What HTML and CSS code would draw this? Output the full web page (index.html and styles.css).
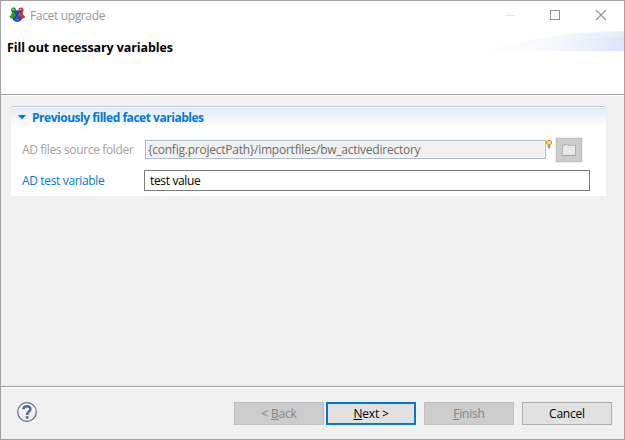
FILE: index.html
```html
<!DOCTYPE html>
<html lang="en">
<head>
<meta charset="utf-8">
<title>Facet upgrade</title>
<link rel="stylesheet" href="styles.css">
</head>
<body>
<div class="window">
  <header class="banner">
    <div class="titlebar">
      <svg class="app-icon" width="17" height="16" viewBox="0 0 17 16">
        <g fill="#25a02b" stroke="#17651c" stroke-width=".6"><circle cx="4.500" cy="3" r="2.200"/><path d="M3.500 4.500h2l.5 3 1.800 2.500-3 2L.8 10 3 7z"/></g>
        <g fill="#dc2c38" stroke="#8e1721" stroke-width=".6"><circle cx="12" cy="3" r="2.200"/><path d="M11 4.500h2l.5 3 2.400 2.500-3.300 2-3-1.500L11 7z"/></g>
        <g fill="#2550c8" stroke="#102b80" stroke-width=".6"><circle cx="8.200" cy="5.800" r="2.200"/><path d="M7.200 7.400h2l.4 2.400 3 1.600q-.3 3-4.300 3.100-4.100-.1-4.400-3.100l2.900-1.600z"/></g>
        <g fill="#fff" opacity=".65"><circle cx="4" cy="2.400" r=".8"/><circle cx="11.600" cy="2.400" r=".8"/><path d="M5.400 12q2.800 1 5.600 0-2.800 2-5.600 0"/></g>
      </svg>
      <span class="title">Facet upgrade</span>
      <svg class="controls" width="130" height="12" viewBox="0 0 130 12" fill="none" shape-rendering="crispEdges">
        <path d="M0 6.500h10" stroke="#e6e6e6"/>
        <path d="M45.500 1.500h9v9h-9z" stroke="#929292"/>
        <path d="M91 1l10 10M101 1l-10 10" stroke="#929292" stroke-width="1.100" shape-rendering="auto"/>
      </svg>
    </div>
    <h1 class="heading">Fill out necessary variables</h1>
    <svg class="swoosh" width="140" height="20" viewBox="0 0 140 20">
      <defs>
        <linearGradient id="a"><stop offset="0" stop-color="#fff"/><stop offset="1" stop-color="#eaf0fb"/></linearGradient>
        <linearGradient id="b"><stop offset="0" stop-color="#fff"/><stop offset="1" stop-color="#e4ebfa"/></linearGradient>
        <linearGradient id="c"><stop offset="0" stop-color="#fff" stop-opacity="0"/><stop offset="1" stop-color="#dce4f8"/></linearGradient>
      </defs>
      <path d="M0 20Q70 0 140 0v20z" fill="url(#a)"/>
      <path d="M30 20Q85 1 140 1v19z" fill="url(#b)"/>
      <path d="M40 20Q90 6 140 6v14z" fill="url(#c)"/>
    </svg>
  </header>
  <main class="content">
    <section class="section">
      <div class="section-head">
        <svg width="8" height="5" viewBox="0 0 8 5"><path d="M0 0h8L4 4.500z" fill="#0078d7"/></svg>
        <h2 class="section-title">Previously filled facet variables</h2>
      </div>
      <div class="row row-source">
        <span class="label label-off">AD files source folder</span>
        <div class="field field-off">{config.projectPath}/importfiles/bw_activedirectory</div>
        <svg class="bulb" width="6" height="9" viewBox="0 0 6 9">
          <path d="M.5 1.200L1.500.5h3l1 .7v2.300L4.300 5H1.700L.5 3.500z" fill="#ffd38a" stroke="#e28422"/>
          <path d="M2 5.500h2v2L3 8.500l-1-1z" fill="#a9a9a9" stroke="#777" stroke-width=".5"/>
        </svg>
        <div class="browse">
          <svg width="14" height="12" viewBox="0 0 14 12"><path d="M.5 11.500V1.500h2v-1h3.500v1h7.500v10z" fill="#e8e8e8" stroke="#b4b4b4"/><path d="M1 11.500h12.500V2" fill="none" stroke="#a8a8a8"/></svg>
        </div>
      </div>
      <div class="row">
        <span class="label">AD test variable</span>
        <div class="field">test value</div>
      </div>
    </section>
  </main>
  <footer class="footer">
    <svg class="help" width="20" height="20" viewBox="0 0 20 20">
      <defs><linearGradient id="h" x2="0" y2="1"><stop offset="0" stop-color="#fff"/><stop offset="1" stop-color="#e6e6e6"/></linearGradient></defs>
      <circle cx="10" cy="10" r="9.300" fill="url(#h)" stroke="#5a6c8c" stroke-width="1.200"/>
      <path d="M6.400 7.300Q6.500 4.200 10 4.200T13.400 7.300Q13.400 8.700 11.700 9.700 10.100 10.700 10.100 12.900" fill="none" stroke="#526891" stroke-width="2.500"/>
      <path d="M8.900 14.200h2.500v2.400H8.900z" fill="#526891"/>
    </svg>
    <div class="btn btn-off"><span>&lt; <u>B</u>ack</span></div>
    <div class="btn btn-default"><span><u>N</u>ext &gt;</span></div>
    <div class="btn btn-off"><span><u>F</u>inish</span></div>
    <div class="btn"><span>Cancel</span></div>
  </footer>
</div>
</body>
</html>
```
FILE: styles.css
```css
* { box-sizing: border-box; }
body { margin: 0; font: 12px/16px "Open Sans", "Noto Sans", sans-serif; letter-spacing: -.35px; color: #000; }
.window { width: 625px; height: 440px; border: 1px solid #a2a2a2; background: #f0f0f0; display: flex; flex-direction: column; overflow: hidden; }
.banner { height: 94px; flex: none; background: #fff; border-bottom: 1px solid #a0a0a0; position: relative; }
.titlebar { height: 30px; display: flex; align-items: center; padding-left: 8px; }
.app-icon { flex: none; margin-top: -2px; }
.title { margin-left: 4px; flex: 1; color: #999; white-space: nowrap; }
.controls { flex: none; margin-right: -11px; margin-top: -2px; }
.heading { margin: 9px 0 0 6px; font-size: 12.5px; line-height: 16px; font-weight: 700; letter-spacing: -.1px; white-space: nowrap; }
.swoosh { position: absolute; right: 0; top: 30px; }
.content { flex: 1; border-top: 1px solid #fff; padding: 10px 0 0 10px; }
.section { width: 595px; height: 90px; background: #fff; border-radius: 3px 3px 0 0; }
.section-head { height: 22px; display: flex; align-items: center; padding-left: 7px; border-top: 1px solid #b8cbdf; border-radius: 3px 3px 0 0; box-shadow: inset 0 1px #fff; background: linear-gradient(#e1e9f3, #fff 95%); }
.section-title { margin: 0 0 0 6px; font-size: 12px; line-height: 16px; color: #0078d7; letter-spacing: -.47px; white-space: nowrap; }
.row { display: flex; }
.row-source { height: 26px; padding-top: 10px; margin-bottom: 16px; }
.label { flex: none; width: 133px; padding-left: 11px; line-height: 21px; color: #0078d7; white-space: nowrap; }
.label-off { width: 134px; color: #a0a0a0; line-height: 24px; }
.field { width: 446px; height: 21px; border: 1px solid #7a7a7a; background: #fff; padding-left: 5px; line-height: 20px; white-space: nowrap; }
.field-off { width: 401px; height: 19px; margin-top: 2px; border-color: #abb8c7; background: #f0f0f0; color: #6d6d6d; box-shadow: inset 0 0 0 1px #fafafa; padding-left: 2px; line-height: 18px; letter-spacing: -.24px; }
.bulb { margin-top: 2px; flex: none; }
.browse { flex: none; width: 26px; height: 24px; margin-left: 4px; border: 1px solid #bfbfbf; background: #ccc; box-shadow: 0 0 0 1px #efefef; display: flex; align-items: center; justify-content: center; }
.footer { height: 53px; flex: none; border-top: 1px solid #a0a0a0; box-shadow: inset 0 1px #fff; padding: 15px 12px 0 16px; display: flex; }
.help { margin-right: auto; }
.btn { width: 90px; height: 23px; border: 1px solid #adadad; background: #e1e1e1; display: flex; align-items: center; justify-content: center; letter-spacing: -.2px; white-space: nowrap; }
.btn + .btn { margin-left: 8px; }
.btn + .btn-default { margin-left: 2px; border: 2px solid #0078d7; }
.btn-off { color: #838383; background: #ccc; border-color: #bfbfbf; }
```
